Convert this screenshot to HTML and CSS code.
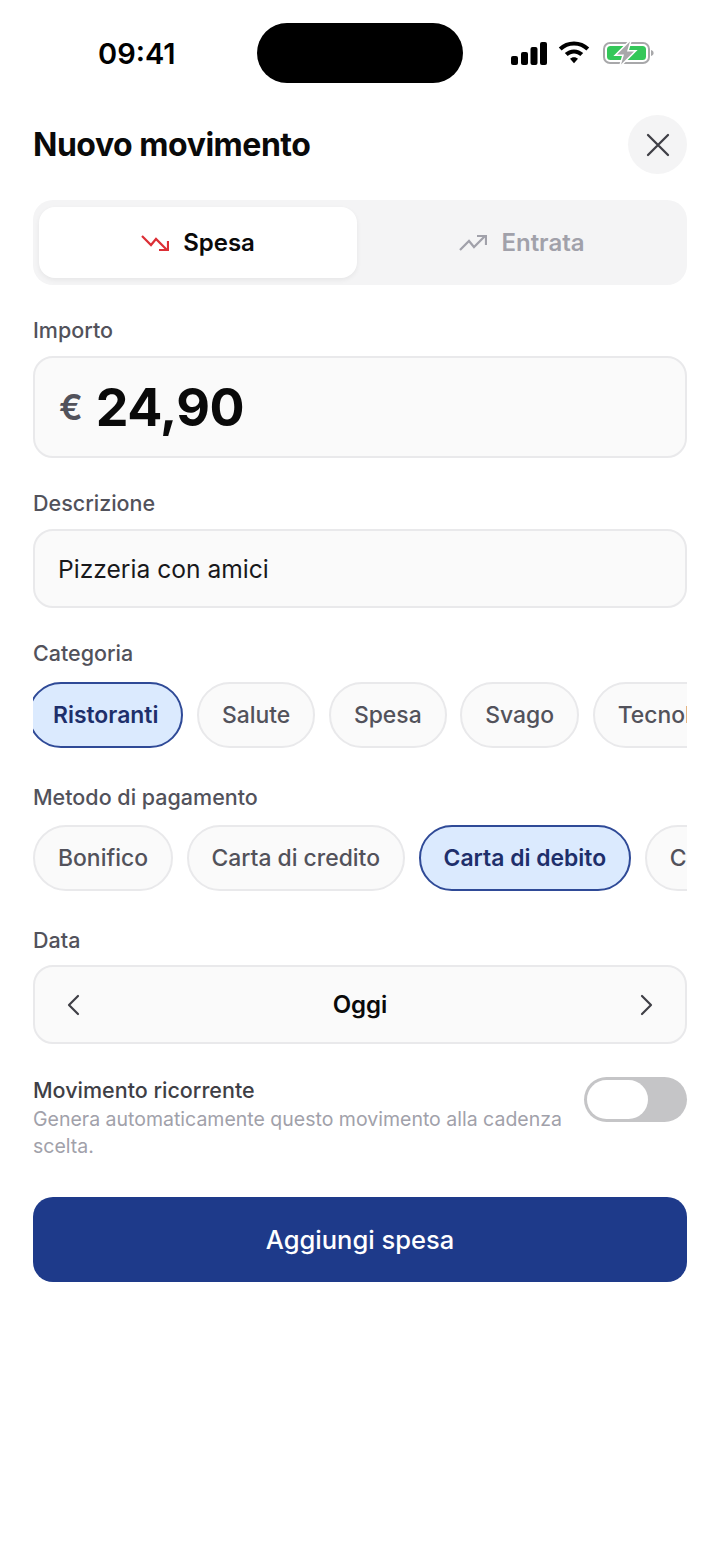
FILE: index.html
```html
<!DOCTYPE html>
<html lang="it">
<head>
    <meta charset="UTF-8">
    <meta name="viewport" content="width=device-width, initial-scale=1.0">
    <title>Nuovo movimento</title>
    <link rel="stylesheet" href="styles.css">
</head>
<body>
    <div class="status-bar">
        <div class="status-time">09:41</div>
        <div class="status-island"></div>
        <div class="status-icons">
            <svg width="36" height="24" viewBox="0 0 36 24">
                <rect x="0" y="15" width="7" height="9" rx="2" fill="#000"/>
                <rect x="10" y="11" width="7" height="13" rx="2" fill="#000"/>
                <rect x="19.500" y="6" width="7" height="18" rx="2" fill="#000"/>
                <rect x="29" y="1" width="7" height="23" rx="2" fill="#000"/>
            </svg>
            <svg width="32" height="24" viewBox="0 0 32 24">
                <path d="M16 0.5C10 0.5 4.8 2.8 0.8 6.6L3.6 9.6C6.8 6.5 11.2 4.6 16 4.6S25.2 6.5 28.4 9.6L31.2 6.6C27.2 2.8 22 0.5 16 0.5Z" fill="#000"/>
                <path d="M16 8.4C12.4 8.4 9.2 9.8 6.8 12.1L9.7 15.1C11.4 13.5 13.6 12.5 16 12.5S20.6 13.500 22.3 15.1L25.2 12.1C22.8 9.8 19.6 8.4 16 8.4Z" fill="#000"/>
                <path d="M16 16.2C14.4 16.2 13 16.8 12 17.8L16 22.2L20 17.8C19 16.8 17.6 16.2 16 16.2Z" fill="#000"/>
            </svg>
            <svg class="battery" width="51" height="24" viewBox="0 0 51 24">
                <rect x="1" y="2" width="45" height="20" rx="6" fill="none" stroke="#a8a8aa" stroke-width="2"/>
                <rect x="4" y="5" width="39" height="14" rx="3.5" fill="#34c759"/>
                <path d="M48 9c1.6.4 2.6 1.500 2.600 3s-1 2.600-2.600 3z" fill="#a8a8aa"/>
                <path class="battery-bolt" d="M27 0.500L14 13.500H21L18 23.500L31 10.500H24Z"/>
            </svg>
        </div>
    </div>

    <div class="sheet">
        <div class="sheet-head">
            <h1>Nuovo movimento</h1>
            <button class="close-btn">
                <svg width="24" height="24" viewBox="0 0 24 24" fill="none" stroke="#3f3f46" stroke-width="2.300" stroke-linecap="round">
                    <path d="M2 2L22 22M22 2L2 22"/>
                </svg>
            </button>
        </div>

        <div class="segment">
            <div class="segment-item active">
                <svg width="28" height="18" viewBox="0 0 28 18" fill="none" stroke="#dc2f36" stroke-width="2.200">
                    <path d="M1 2L10 11L15 5L26 16"/>
                    <path d="M27 7V16H18"/>
                </svg>
                <span>Spesa</span>
            </div>
            <div class="segment-item">
                <svg width="28" height="18" viewBox="0 0 28 18" fill="none" stroke="#a1a1aa" stroke-width="2.200">
                    <path d="M1 16L10 7L15 13L26 2"/>
                    <path d="M18 2H27V11"/>
                </svg>
                <span>Entrata</span>
            </div>
        </div>

        <div class="field-label label-importo">Importo</div>
        <div class="amount-box">
            <span class="amount-cur">€</span>
            <span class="amount-val">24,90</span>
        </div>

        <div class="field-label label-descr">Descrizione</div>
        <div class="text-box">Pizzeria con amici</div>

        <div class="field-label label-cat">Categoria</div>
        <div class="chips">
            <div class="chip selected chip-first">Ristoranti</div>
            <div class="chip">Salute</div>
            <div class="chip">Spesa</div>
            <div class="chip">Svago</div>
            <div class="chip">Tecnologia</div>
        </div>

        <div class="field-label label-met">Metodo di pagamento</div>
        <div class="chips">
            <div class="chip">Bonifico</div>
            <div class="chip">Carta di credito</div>
            <div class="chip selected">Carta di debito</div>
            <div class="chip">Contanti</div>
        </div>

        <div class="field-label label-data">Data</div>
        <div class="date-box">
            <svg width="14" height="22" viewBox="0 0 14 22" fill="none" stroke="#3f3f46" stroke-width="2.200" stroke-linecap="round" stroke-linejoin="round">
                <path d="M12 2L3 11L12 20"/>
            </svg>
            <span>Oggi</span>
            <svg width="14" height="22" viewBox="0 0 14 22" fill="none" stroke="#3f3f46" stroke-width="2.200" stroke-linecap="round" stroke-linejoin="round">
                <path d="M2 2L11 11L2 20"/>
            </svg>
        </div>

        <div class="recurring">
            <div class="recurring-text">
                <div class="recurring-title">Movimento ricorrente</div>
                <div class="recurring-sub">Genera automaticamente questo movimento alla cadenza scelta.</div>
            </div>
            <div class="toggle"><div class="toggle-knob"></div></div>
        </div>

        <button class="submit-btn">Aggiungi spesa</button>
    </div>
</body>
</html>
```

FILE: styles.css
```css
* {
    box-sizing: border-box;
}

body {
    font-family: Inter, "Liberation Sans", sans-serif;
    background-color: #fff;
    margin: 0;
    padding: 0;
    width: 720px;
    height: 1564px;
    overflow: hidden;
}

.status-bar {
    display: flex;
    align-items: center;
    height: 115px;
    padding: 23px 0 32px 98px;
}

.status-time {
    width: 159px;
    font-size: 29px;
    font-weight: 600;
    color: #000;
}

.status-island {
    width: 206px;
    height: 60px;
    background: #000;
    border-radius: 30px;
}

.status-icons {
    display: flex;
    align-items: center;
    gap: 11px;
    margin-left: 48px;
}

.battery {
    margin-left: 2px;
}

.battery-bolt {
    fill: #a8a8aa;
    stroke: #fff;
    stroke-width: 3;
    paint-order: stroke;
}

.sheet {
    padding: 0 33px;
}

.sheet-head {
    display: flex;
    justify-content: space-between;
    align-items: center;
    height: 59px;
}

h1 {
    margin: 0;
    font-size: 32px;
    font-weight: 700;
    letter-spacing: -0.47px;
    color: #0a0a0a;
}

.close-btn {
    width: 59px;
    height: 59px;
    border: none;
    border-radius: 50%;
    background: #f4f4f5;
    display: flex;
    align-items: center;
    justify-content: center;
    padding: 0;
}

.segment {
    display: flex;
    height: 85px;
    margin-top: 26px;
    padding: 7px 0 7px 6px;
    background: #f4f4f5;
    border-radius: 20px;
}

.segment-item {
    flex: 1;
    display: flex;
    align-items: center;
    justify-content: center;
    gap: 14px;
    font-size: 24px;
    font-weight: 600;
    color: #a1a1aa;
    border-radius: 16px;
}

.segment-item.active {
    flex: none;
    width: 318px;
    background: #fff;
    color: #0a0a0a;
    box-shadow: 0 2px 5px rgba(0,0,0,0.06);
}

.field-label {
    font-size: 21.5px;
    font-weight: 550;
    line-height: 24px;
    color: #52525b;
}

.label-importo {
    margin-top: 33px;
    margin-bottom: 14px;
}

.amount-box {
    display: flex;
    align-items: center;
    gap: 13px;
    height: 102px;
    padding: 0 24px;
    background: #fafafa;
    border: 2px solid #e9e9eb;
    border-radius: 20px;
}

.amount-cur {
    font-size: 35px;
    font-weight: 600;
    color: #52525b;
}

.amount-val {
    font-size: 52px;
    font-weight: 700;
    color: #0a0a0a;
    letter-spacing: -0.5px;
}

.label-descr {
    margin-top: 33px;
    margin-bottom: 14px;
}

.text-box {
    display: flex;
    align-items: center;
    height: 79px;
    padding: 0 23px;
    background: #fafafa;
    border: 2px solid #e9e9eb;
    border-radius: 20px;
    font-size: 24.6px;
    color: #18181b;
}

.label-cat {
    margin-top: 33px;
    margin-bottom: 17px;
}

.chips {
    display: flex;
    gap: 13.6px;
    overflow: hidden;
}

.chip {
    flex: none;
    display: flex;
    align-items: center;
    height: 66px;
    padding: 0 23px;
    background: #fafafa;
    border: 2px solid #e9e9eb;
    border-radius: 33px;
    font-size: 22.9px;
    font-weight: 550;
    color: #52525b;
}

.chip.selected {
    background: #dbeafe;
    border-color: #2f4a97;
    color: #1e2f6b;
    font-weight: 600;
}

.chip-first {
    margin-left: -5px;
}

.label-met {
    margin-top: 37px;
    margin-bottom: 16px;
}

.label-data {
    margin-top: 37px;
    margin-bottom: 13px;
}

.date-box {
    display: flex;
    align-items: center;
    justify-content: space-between;
    height: 79px;
    padding: 0 31px;
    background: #fafafa;
    border: 2px solid #e9e9eb;
    border-radius: 20px;
    font-size: 24px;
    font-weight: 600;
    color: #0a0a0a;
}

.recurring {
    display: flex;
    justify-content: space-between;
    align-items: flex-start;
    margin-top: 33px;
}

.recurring-text {
    width: 540px;
}

.recurring-title {
    font-size: 21.5px;
    font-weight: 550;
    line-height: 27px;
    margin-bottom: 2px;
    color: #3f3f46;
}

.recurring-sub {
    font-size: 19.5px;
    line-height: 27px;
    color: #a1a1aa;
}

.toggle {
    width: 103px;
    height: 45px;
    background: #c5c5c7;
    border-radius: 23px;
    padding: 3px;
}

.toggle-knob {
    width: 61px;
    height: 39px;
    background: #fff;
    border-radius: 20px;
}

.submit-btn {
    display: block;
    width: 100%;
    height: 85px;
    margin-top: 37px;
    background: #1e3a8a;
    color: #fff;
    border: none;
    border-radius: 20px;
    font-family: inherit;
    font-size: 25.5px;
    font-weight: 550;
}
```
